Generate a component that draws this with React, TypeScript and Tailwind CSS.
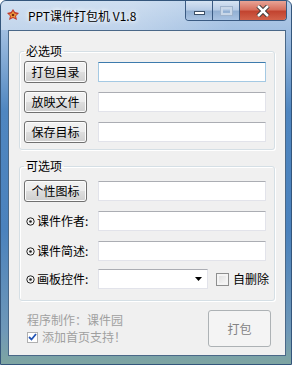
import React from "react";

const font = { fontFamily: '"Noto Sans CJK SC", "Noto Sans", sans-serif' };

function Btn({ label }: { label: string }) {
  return (
    <button className="w-[63px] h-[22px] shrink-0 rounded-[3px] border border-[#707070] bg-[linear-gradient(180deg,#f2f2f2_0%,#ebebeb_48%,#dddddd_52%,#cfcfcf_100%)] shadow-[inset_0_0_0_1px_#fcfcfc] text-[12px] leading-[16px] text-black">
      {label}
    </button>
  );
}

function Field({ focused }: { focused?: boolean }) {
  return (
    <div
      className={
        focused
          ? "flex-1 h-[20px] bg-white border border-[#a4c9e3] border-t-[#3d7bad]"
          : "flex-1 h-[20px] bg-white border border-[#e2e3ea] border-t-[#abadb3]"
      }
    />
  );
}

function Dot() {
  return (
    <svg width="9" height="9" viewBox="0 0 9 9" className="shrink-0">
      <circle cx="4.5" cy="4.5" r="3.7" fill="none" stroke="#222" strokeWidth="1" />
      <circle cx="4.5" cy="4.5" r="1.3" fill="#222" />
    </svg>
  );
}

function Label({ text }: { text: string }) {
  return (
    <div className="w-[63px] shrink-0 flex items-center gap-[2px] pl-[2px] text-[12px] leading-[16px] text-black whitespace-nowrap">
      <Dot />
      <span>{text}</span>
    </div>
  );
}

function Group({ title, children, className }: { title: string; children: React.ReactNode; className?: string }) {
  return (
    <fieldset
      className={
        "min-w-0 mx-[10px] border border-[#d5dfe5] rounded-[3px] shadow-[inset_1px_1px_0_#fff,1px_1px_0_#fff] " +
        (className ?? "")
      }
    >
      <legend className="ml-[4px] px-[2px] text-[12px] leading-[16px] text-black">{title}</legend>
      {children}
    </fieldset>
  );
}

export default function App() {
  return (
    <div
      style={font}
      className="w-[292px] h-[365px] flex flex-col rounded-t-[6px] border border-[#34567c] bg-[linear-gradient(180deg,#b9d0ea_0px,#a3c0e2_28px,#4f86c0_110px,#4b82bd_230px,#6f98b8_330px,#7fa6a0_365px)] overflow-hidden"
    >
      {/* title bar */}
      <div className="h-[29px] shrink-0 flex items-start bg-[linear-gradient(90deg,rgba(255,255,255,0.35)_0%,rgba(255,255,255,0.3)_45%,rgba(255,255,255,0)_80%)]">
        <svg width="12" height="11" viewBox="0 0 12 11" className="ml-[6px] mt-[8px]">
          <path d="M6 0 L8 3 L12 4 L9 7 L10 11 L6 9 L2 11 L3 7 L0 4 L4 3 Z" fill="#c0392b" />
          <path d="M6 2 L7.5 4.5 L10 5 L8 7 L8.5 9 L6 8 L3.5 9 L4 7 L2 5 L4.5 4.5 Z" fill="#f0a040" />
          <circle cx="6" cy="6" r="1.3" fill="#7a2a10" />
        </svg>
        <span className="ml-[9px] mt-[7px] text-[12px] leading-[16px] text-black [text-shadow:0_0_6px_#fff,0_0_4px_#fff]">
          PPT课件打包机 V1.8
        </span>
        <div className="ml-auto mr-[4px] flex h-[20px] rounded-b-[4px] border border-t-0 border-[#3a5a82] overflow-hidden">
          <div className="w-[27px] h-full flex items-center justify-center border-r border-[#3a5a82] bg-[linear-gradient(180deg,#d6e3f2_0%,#b9cde6_45%,#93b0d3_55%,#a9c3e2_100%)]">
            <div className="w-[11px] h-[4px] mt-[5px] bg-white border border-[#3b4f68]" />
          </div>
          <div className="w-[27px] h-full flex items-center justify-center border-r border-[#3a5a82] bg-[linear-gradient(180deg,#d6e3f2_0%,#b9cde6_45%,#93b0d3_55%,#a9c3e2_100%)]">
            <div className="w-[11px] h-[8px] border-2 border-[#c9d7e8] outline outline-1 outline-[#9fb3cc]" />
          </div>
          <div className="w-[46px] h-full flex items-center justify-center bg-[linear-gradient(180deg,#e8a496_0%,#d7705e_45%,#c24430_55%,#d2624a_100%)]">
            <svg width="14" height="12" viewBox="0 0 14 12">
              <path d="M2 1 L7 6 L12 1 M2 11 L7 6 L12 11" stroke="#3a3a3a" strokeWidth="4.5" fill="none" />
              <path d="M2 1 L7 6 L12 1 M2 11 L7 6 L12 11" stroke="#fff" strokeWidth="2.5" fill="none" />
            </svg>
          </div>
        </div>
      </div>

      {/* client area */}
      <div className="flex-1 ml-[7px] mr-[5px] mb-[8px] border border-[#4a6888] bg-[#f0f0f0] flex flex-col">
        <Group title="必选项" className="mt-[12px]">
          <div className="flex flex-col gap-[8px] pt-[2px] pl-[4px] pr-[8px] pb-[6px]">
            <div className="flex items-center gap-[11px]">
              <Btn label="打包目录" />
              <Field focused />
            </div>
            <div className="flex items-center gap-[11px]">
              <Btn label="放映文件" />
              <Field />
            </div>
            <div className="flex items-center gap-[11px]">
              <Btn label="保存目标" />
              <Field />
            </div>
          </div>
        </Group>

        <Group title="可选项" className="mt-[8px]">
          <div className="flex flex-col pt-[6px] pl-[4px] pr-[8px] pb-[11px]">
            <div className="flex items-center gap-[11px]">
              <Btn label="个性图标" />
              <Field />
            </div>
            <div className="flex items-center gap-[11px] mt-[9px]">
              <Label text="课件作者:" />
              <Field />
            </div>
            <div className="flex items-center gap-[11px] mt-[10px]">
              <Label text="课件简述:" />
              <Field />
            </div>
            <div className="flex items-center h-[20px] mt-[8px] whitespace-nowrap">
              <Label text="画板控件:" />
              <div className="ml-[11px] w-[110px] h-[20px] shrink-0 bg-white border border-[#e2e3ea] border-t-[#abadb3] flex items-center justify-end pr-[5px]">
                <svg width="7" height="4" viewBox="0 0 7 4">
                  <path d="M0 0 L7 0 L3.5 4 Z" fill="#000" />
                </svg>
              </div>
              <div className="ml-[8px] w-[13px] h-[13px] shrink-0 border border-[#8e8f8f] bg-[linear-gradient(135deg,#dcdcdc,#fbfbfb)] shadow-[inset_0_0_0_2px_#f4f4f4]" />
              <span className="ml-[4px] text-[12px] leading-[16px] text-black">自删除</span>
            </div>
          </div>
        </Group>

        <div className="mt-[9px] flex items-start pl-[18px] pr-[14px]">
          <div className="flex flex-col pt-[2px] text-[12px] leading-[16px] text-[#a0a0a0]">
            <span>程序制作：课件园</span>
            <div className="flex items-center gap-[4px] mt-[1px]">
              <div className="w-[11px] h-[11px] border border-[#b0b0b0] bg-white flex items-center justify-center">
                <svg width="9" height="8" viewBox="0 0 9 8">
                  <path d="M1 4 L3.5 6.5 L8 1" stroke="#2355b5" strokeWidth="1.8" fill="none" />
                </svg>
              </div>
              <span>添加首页支持！</span>
            </div>
          </div>
          <button className="ml-auto w-[63px] h-[37px] rounded-[3px] border border-[#adb2b5] bg-[#f4f4f4] text-[12px] text-[#838383]">
            打包
          </button>
        </div>
      </div>
    </div>
  );
}
